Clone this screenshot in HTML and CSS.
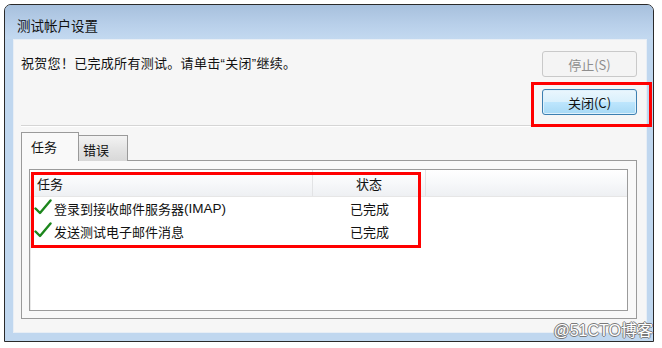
FILE: index.html
```html
<!DOCTYPE html>
<html lang="zh-CN">
<head>
<meta charset="utf-8">
<title>测试帐户设置</title>
<link rel="stylesheet" href="styles.css">
</head>
<body>
<div class="window">
  <div class="titlebar">测试帐户设置</div>
  <div class="content">
    <div class="top">
      <div class="message">祝贺您！已完成所有测试。请单击<span class="q">“</span>关闭<span class="q">”</span>继续。</div>
      <div class="buttons">
        <div class="btn btn-disabled">停止(S)</div>
        <div class="btn btn-default">关闭(C)</div>
      </div>
    </div>
    <div class="separator"></div>
    <div class="tabs">
      <div class="tab tab-active">任务</div>
      <div class="tab">错误</div>
    </div>
    <div class="panel">
      <div class="list">
        <div class="list-head">
          <div class="col-task">任务</div>
          <div class="col-status">状态</div>
          <div class="col-rest"></div>
        </div>
        <div class="row">
          <div class="col-task"><svg class="check" viewBox="0 0 18 16" width="18" height="16"><path d="M1.5 9.5 L6 14 L16.5 1.5" fill="none" stroke="#1c861c" stroke-width="2.4" stroke-linecap="round" stroke-linejoin="round"/></svg>登录到接收邮件服务器<span class="lat">(IMAP)</span></div>
          <div class="col-status">已完成</div>
        </div>
        <div class="row">
          <div class="col-task"><svg class="check" viewBox="0 0 18 16" width="18" height="16"><path d="M1.5 9.5 L6 14 L16.5 1.5" fill="none" stroke="#1c861c" stroke-width="2.4" stroke-linecap="round" stroke-linejoin="round"/></svg>发送测试电子邮件消息</div>
          <div class="col-status">已完成</div>
        </div>
      </div>
    </div>
  </div>
  <div class="mark mark-close"></div>
  <div class="mark mark-list"></div>
  <div class="watermark">@51CTO博客</div>
</div>
</body>
</html>
```

FILE: styles.css
```css
* { box-sizing: border-box; }
html, body { margin: 0; padding: 0; background: #ffffff; }
body {
  font-family: "Noto Sans CJK SC", "Liberation Sans", sans-serif;
  font-size: 13px;
  color: #111111;
}
.q { font-family: "Liberation Sans", sans-serif; }
.lat { font-family: "Liberation Sans", sans-serif; font-size: 13.5px; }
.window {
  position: relative;
  margin: 4px 0 0 4px;
  width: 650px;
  height: 338px;
  border: 1px solid #2a2a2a;
  border-radius: 7px 7px 0 0;
  background: #c0d7ef;
  display: flex;
  flex-direction: column;
}
.titlebar {
  height: 34px;
  padding-left: 12px;
  line-height: 40px;
  font-size: 13.5px;
  color: #111;
  border-radius: 6px 6px 0 0;
  background: linear-gradient(#a7c0dd, #b9d0ea 60%, #c3d9f0);
}
.content {
  flex: 1;
  margin: 0 6px 8px 8px;
  background: #f6f6f6;
  border: 1px solid #e8eef5;
  display: flex;
  flex-direction: column;
  padding: 0 9px 13px 7px;
}
.top {
  display: flex;
  justify-content: space-between;
}
.message {
  padding-top: 13px;
  line-height: 20px;
  letter-spacing: 0.3px;
}
.buttons {
  display: flex;
  flex-direction: column;
  gap: 12px;
  padding-top: 11px;
}
.btn {
  width: 95px;
  height: 26px;
  border-radius: 3px;
  display: flex;
  align-items: center;
  justify-content: center;
  font-size: 13px;
}
.btn-disabled {
  border: 1px solid #c9c9c9;
  background: #f4f4f4;
  color: #8e8e8e;
}
.btn-default {
  border: 1px solid #3c7fb1;
  background: linear-gradient(#eaf6fd, #d9f0fc 50%, #bee6fd 50%, #a7d9f5);
  box-shadow: inset 0 0 0 1px #dff1fc;
  color: #111;
}
.separator {
  margin-top: 10px;
  border-top: 1px solid #d5d5d5;
  border-bottom: 1px solid #ffffff;
}
.tabs {
  display: flex;
  align-items: flex-end;
  margin-top: 6px;
  height: 28px;
  position: relative;
  z-index: 1;
  margin-bottom: -1px;
}
.tab {
  height: 26px;
  width: 49px;
  border: 1px solid #9a9a9a;
  border-bottom: none;
  border-left: none;
  background: linear-gradient(#f3f3f3, #e4e4e4 50%, #d8d8d8);
  display: flex;
  align-items: center;
  padding-left: 4px;
  padding-top: 2px;
}
.tab-active {
  width: 58px;
  border-left: 1px solid #9a9a9a;
  border-right: 1px solid #9a9a9a;
  background: #f9f9f9;
  padding-left: 9px;
  padding-top: 0;
  padding-bottom: 2px;
  height: 29px;
}
.tab-active + .tab { border-left: none; }
.panel {
  flex: 1;
  border: 1px solid #9a9a9a;
  background: #f9f9f9;
  padding: 8px 8px 7px 7px;
  display: flex;
}
.list {
  flex: 1;
  border: 1px solid #9b9b9b;
  background: #ffffff;
  box-shadow: inset 1px 1px 0 #e8e8e8;
}
.list-head {
  display: flex;
  height: 27px;
  background: linear-gradient(#ffffff, #f7f8fa 50%, #eef0f3);
  border-bottom: 1px solid #e6e6e6;
}
.list-head > div {
  display: flex;
  align-items: center;
  border-right: 1px solid #e2e3e5;
}
.list-head .col-task { width: 283px; padding-left: 7px; }
.list-head .col-status { width: 113px; justify-content: center; }
.list-head .col-rest { flex: 1; border-right: none; }
.row {
  display: flex;
  height: 23px;
  align-items: center;
}
.row .col-task {
  width: 283px;
  display: flex;
  align-items: center;
  padding-left: 4px;
}
.row .col-status {
  width: 113px;
  text-align: center;
}
.check { margin-right: 2px; margin-top: -3px; }
.mark {
  position: absolute;
  border: 3px solid #ff0000;
}
.mark-close {
  left: 526px;
  top: 77px;
  width: 121px;
  height: 45px;
}
.mark-list {
  left: 26px;
  top: 167px;
  width: 390px;
  height: 76px;
}
.watermark {
  position: absolute;
  right: 0;
  bottom: 0;
  font-family: "Liberation Sans", "Noto Sans CJK SC", sans-serif;
  font-size: 16px;
  line-height: 20px;
  color: #ffffff;
  text-shadow: 1px 0 0 #7a7a7a, -1px 0 0 #7a7a7a, 0 1px 0 #7a7a7a, 0 -1px 0 #7a7a7a;
}
```
